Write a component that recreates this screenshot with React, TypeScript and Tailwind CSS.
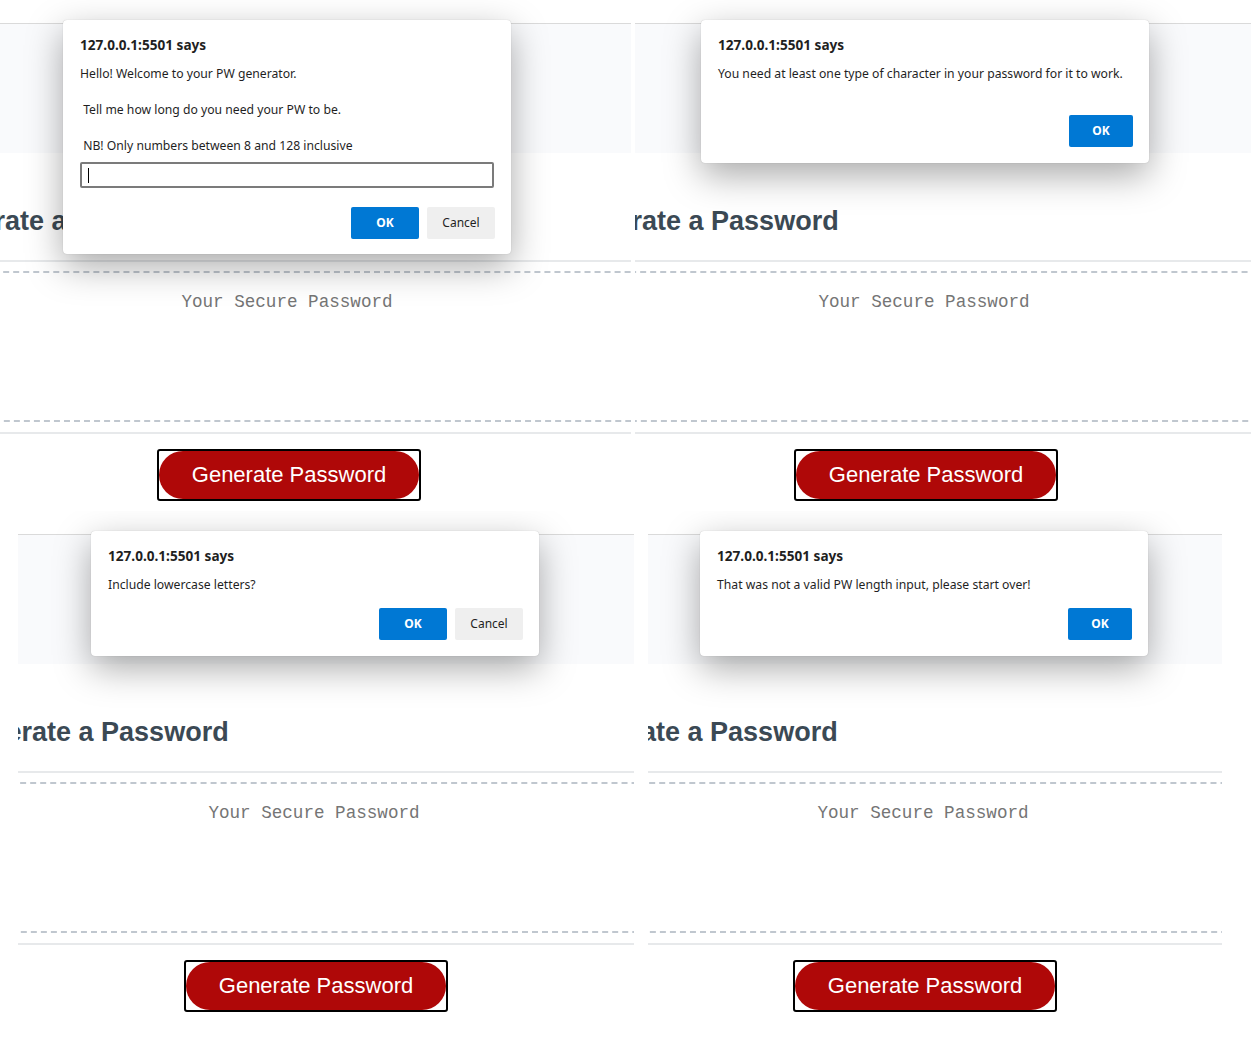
import React from "react";

const DLG = "font-['Noto_Sans','Open_Sans',sans-serif]";

function OkButton({ wide }: { wide?: boolean }) {
  return (
    <div
      className={
        (wide ? "w-[68px]" : "w-[64px]") +
        " h-[32px] rounded-[2px] bg-[#0078d4] text-white text-[12px] font-bold flex items-center justify-center"
      }
    >
      OK
    </div>
  );
}

function CancelButton() {
  return (
    <div className="w-[68px] h-[32px] rounded-[2px] bg-[#efefef] text-[#1f1f1f] text-[12px] flex items-center justify-center">
      Cancel
    </div>
  );
}

function Dialog({ pos, children }: { pos: string; children: React.ReactNode }) {
  return (
    <div
      className={
        "absolute top-[20px] w-[448px] rounded-[4px] bg-white px-[17px] pt-[17px] shadow-[0_0_1px_rgba(0,0,0,0.25),0_12px_36px_rgba(0,0,0,0.34)] " +
        DLG +
        " " +
        pos
      }
    >
      <div className="text-[13.6px] leading-[16px] font-bold text-[#1f1f1f] whitespace-nowrap">127.0.0.1:5501 says</div>
      {children}
    </div>
  );
}

function Page({
  width,
  offset,
  children,
}: {
  width: string;
  offset: string;
  children?: React.ReactNode;
}) {
  return (
    <div className={"relative h-full overflow-hidden bg-white shrink-0 " + width}>
      <div className="h-[23px] bg-white" />
      <div className="h-px bg-[#dadada]" />
      <div className="h-[129px] bg-[#f9fafc]" />
      <div className="bg-white">
        <div className={"w-[720px] " + offset}>
          <h2 className="pt-[52px] text-[27px] leading-[32px] font-bold text-[#3b4954] whitespace-nowrap font-['Liberation_Sans',Arial,sans-serif]">
            Generate a Password
          </h2>
          <div className="mt-[23px] h-[2px] bg-[#e7e9eb]" />
          <div className="mt-[9px] h-[151px] border-2 border-dashed border-[#c0c7cf] rounded-[6px] pt-[17px] text-center text-[17.6px] leading-[24px] text-[#757575] font-['Liberation_Mono',monospace] whitespace-nowrap">
            Your Secure Password
          </div>
          <div className="mt-[10px] h-[2px] bg-[#e7e9eb]" />
          <div className="flex justify-center pt-[15px]">
            <div className="ml-[20px] mr-[16px] border-2 border-black rounded-[3px]">
              <div className="w-[260px] h-[48px] rounded-[25px] bg-[#af0808] text-white text-[22px] leading-[22px] flex items-center justify-center whitespace-nowrap font-['Liberation_Sans',Arial,sans-serif]">
                Generate Password
              </div>
            </div>
          </div>
        </div>
      </div>
      {children}
    </div>
  );
}

export default function App() {
  return (
    <div className="w-[1258px] h-[1061px] bg-white overflow-hidden">
      <div className="flex h-[511px] gap-[4px]">
        <Page width="w-[631px]" offset="ml-[-73px]">
          <Dialog pos="left-[63px] pb-[15px]">
            <div className="mt-[12px] text-[12.2px] leading-[18px] text-[#1f1f1f] whitespace-pre">
              {"Hello! Welcome to your PW generator.\n\n Tell me how long do you need your PW to be.\n\n NB! Only numbers between 8 and 128 inclusive"}
            </div>
            <div className="mt-[7px] h-[26px] border-2 border-[#7b7b7b] rounded-[2px] flex items-center pl-[6px]">
              <span className="w-px h-[15px] bg-black" />
            </div>
            <div className="mt-[19px] flex justify-end gap-[8px] -mr-px">
              <OkButton wide />
              <CancelButton />
            </div>
          </Dialog>
        </Page>
        <Page width="w-[616px]" offset="ml-[-71px]">
          <Dialog pos="left-[66px] pb-[16px]">
            <div className="mt-[12px] text-[12.2px] leading-[18px] text-[#1f1f1f] whitespace-nowrap">
              You need at least one type of character in your password for it to work.
            </div>
            <div className="mt-[32px] flex justify-end -mr-px">
              <OkButton />
            </div>
          </Dialog>
        </Page>
      </div>
      <div className="flex h-[550px] pl-[18px] gap-[14px]">
        <Page width="w-[616px]" offset="ml-[-64px]">
          <Dialog pos="left-[73px] pb-[16px]">
            <div className="mt-[12px] text-[12.2px] leading-[18px] text-[#1f1f1f] whitespace-nowrap">
              Include lowercase letters?
            </div>
            <div className="mt-[14px] flex justify-end gap-[8px] -mr-px">
              <OkButton wide />
              <CancelButton />
            </div>
          </Dialog>
        </Page>
        <Page width="w-[574px]" offset="ml-[-85px]">
          <Dialog pos="left-[52px] pb-[16px]">
            <div className="mt-[12px] text-[12.2px] leading-[18px] text-[#1f1f1f] whitespace-nowrap">
              That was not a valid PW length input, please start over!
            </div>
            <div className="mt-[14px] flex justify-end -mr-px">
              <OkButton />
            </div>
          </Dialog>
        </Page>
      </div>
    </div>
  );
}
